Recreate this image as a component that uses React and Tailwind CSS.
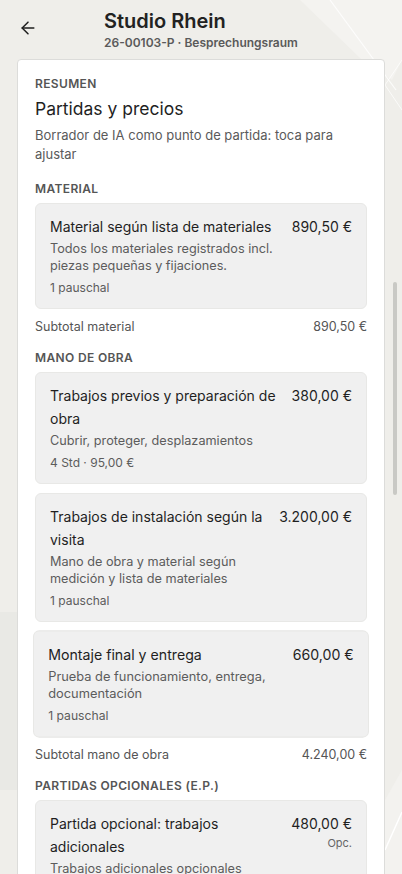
import { ArrowLeft } from 'lucide-react'

const sections = [
  {
    label: 'Material',
    items: [
      {
        title: 'Material según lista de materiales',
        price: '890,50 €',
        desc: 'Todos los materiales registrados incl. piezas pequeñas y fijaciones.',
        qty: '1 pauschal',
      },
    ],
    subtotal: ['Subtotal material', '890,50 €'],
  },
  {
    label: 'Mano de obra',
    items: [
      {
        title: 'Trabajos previos y preparación de obra',
        price: '380,00 €',
        desc: 'Cubrir, proteger, desplazamientos',
        qty: '4 Std · 95,00 €',
      },
      {
        title: 'Trabajos de instalación según la visita',
        price: '3.200,00 €',
        desc: 'Mano de obra y material según medición y lista de materiales',
        qty: '1 pauschal',
      },
      {
        title: 'Montaje final y entrega',
        price: '660,00 €',
        desc: 'Prueba de funcionamiento, entrega, documentación',
        qty: '1 pauschal',
        active: true,
      },
    ],
    subtotal: ['Subtotal mano de obra', '4.240,00 €'],
  },
  {
    label: 'Partidas opcionales (E.P.)',
    items: [
      {
        title: 'Partida opcional: trabajos adicionales',
        price: '480,00 €',
        optional: true,
        desc: 'Trabajos adicionales opcionales',
        qty: '1 pauschal',
      },
    ],
  },
]

function ItemCard({ item }) {
  return (
    <div
      className={
        'rounded-md border border-[#e8e8e6] bg-[#f0f0f0] px-[14px] pt-[11px] pb-[12px] ' +
        (item.active ? 'scale-[1.012]' : '')
      }
    >
      <div className="flex items-start gap-3">
        <div className="min-w-0 flex-1">
          <div className="text-[14px] leading-[23px] text-[#1f1f1f]">{item.title}</div>
          <div className="mt-0.5 text-[12.7px] leading-[17px] text-[#5c5c5c]">{item.desc}</div>
          <div className="mt-1.5 text-[12px] leading-4 text-[#5c5c5c]">{item.qty}</div>
        </div>
        <div className="flex shrink-0 flex-col items-end">
          <div className="text-[14px] leading-[23px] text-[#1f1f1f]">{item.price}</div>
          {item.optional && <div className="text-[11px] leading-4 text-[#666]">Opc.</div>}
        </div>
      </div>
    </div>
  )
}

export default function App() {
  return (
    <div
      className="relative h-[874px] w-[402px] overflow-hidden bg-[#efeeea] text-[#1f1f1f]"
      style={{ fontFamily: 'Inter, "Noto Sans", sans-serif' }}
    >
      <svg className="absolute inset-0" width="402" height="874" viewBox="0 0 402 874">
        <polygon points="300,0 402,0 402,60 392,80 362,60" fill="#f4f3f0" />
        <polyline points="330,0 396,90" stroke="#ffffff" strokeWidth="1.2" fill="none" opacity="0.8" />
        <polyline points="402,60 385,85 402,110" stroke="#ffffff" strokeWidth="1" fill="none" opacity="0.7" />
        <rect x="0" y="612" width="17" height="178" fill="#e9e9e5" />
        <polygon points="385,800 402,770 402,874 385,874" fill="#f3f2ef" />
        <polyline points="385,850 402,812" stroke="#ffffff" strokeWidth="1.5" fill="none" />
      </svg>

      <div className="relative">
        <header className="flex h-[59px] items-start">
          <button className="ml-[18px] mt-[18px] text-[#1f1f1f]">
            <ArrowLeft size={20} strokeWidth={1.8} />
          </button>
          <div className="ml-[66px] pt-[7px]">
            <h1 className="text-[20px] font-semibold leading-7 text-[#222]">Studio Rhein</h1>
            <p className="text-[12px] font-semibold leading-4 text-[#5a5a5a]">
              26-00103-P · Besprechungsraum
            </p>
          </div>
        </header>

        <div className="mx-[17px] rounded border border-[#dcdcda] bg-white px-[17px] pt-[16px] pb-6">
          <div className="text-[12px] font-semibold uppercase leading-4 tracking-[0.03em] text-[#555]">
            Resumen
          </div>
          <h2 className="mt-[5px] text-[17.5px] leading-6 text-[#1f1f1f]">Partidas y precios</h2>
          <p className="mt-[5px] text-[13px] leading-[19px] text-[#5a5a5a]">
            Borrador de IA como punto de partida: toca para ajustar
          </p>

          {sections.map((s, i) => (
            <div key={s.label} className={i === 0 ? 'mt-[17px]' : 'mt-[15px]'}>
              <div className="text-[12px] font-semibold uppercase leading-4 tracking-[0.03em] text-[#555]">
                {s.label}
              </div>
              <div className="mt-[6px] flex flex-col gap-[9px]">
                {s.items.map((it) => (
                  <ItemCard key={it.title} item={it} />
                ))}
              </div>
              {s.subtotal && (
                <div className="mt-[10px] flex justify-between text-[12.5px] leading-4 text-[#555]">
                  <span>{s.subtotal[0]}</span>
                  <span>{s.subtotal[1]}</span>
                </div>
              )}
            </div>
          ))}
        </div>
      </div>

      <div className="absolute right-[5px] top-[282px] h-[213px] w-1 rounded-full bg-[#c9c9c5]" />
    </div>
  )
}
